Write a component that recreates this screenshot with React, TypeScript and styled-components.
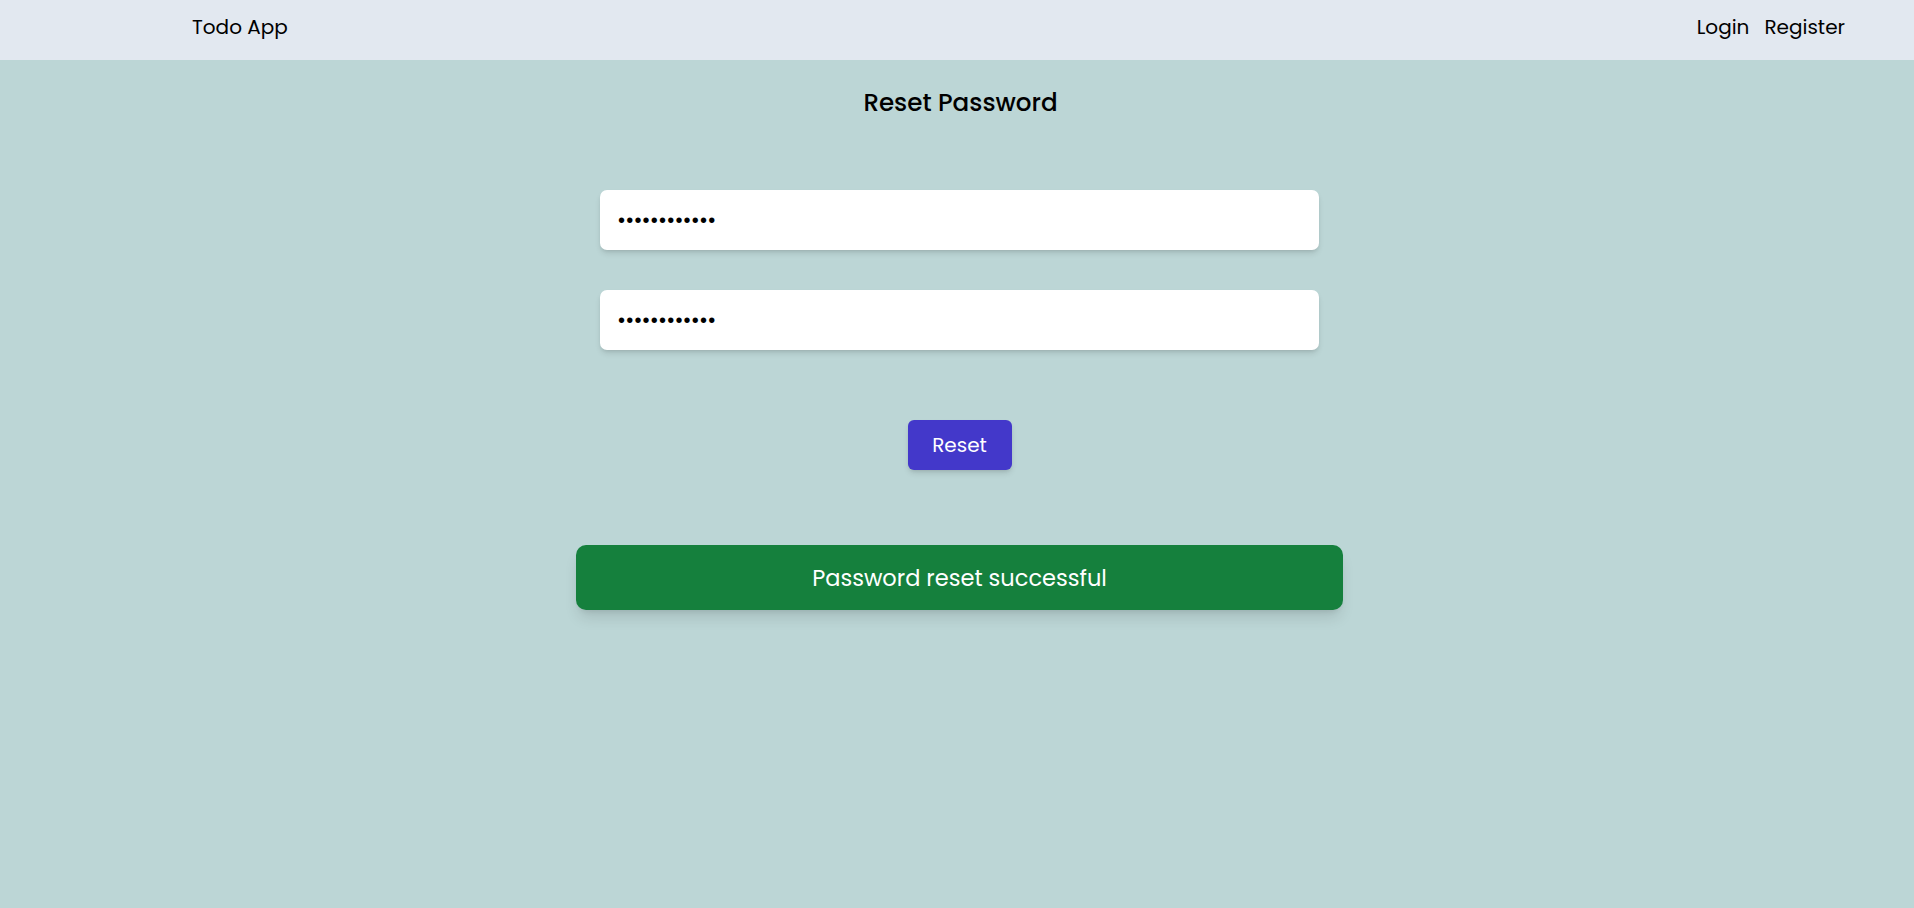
import { createGlobalStyle } from "styled-components"
import styled from "styled-components"

const GlobalStyle = createGlobalStyle`
  * {
    box-sizing: border-box;
  }
  body {
    margin: 0;
    font-family: "Poppins", "Open Sans", "Noto Sans", sans-serif;
    background: #bcd6d6;
    color: #000;
  }
`

export default function App() {
  return (
    <>
      <GlobalStyle />
      <Page>
        <NavBar>
          <Brand>Todo App</Brand>
          <NavLinks>
            <NavLink href="#">Login</NavLink>
            <NavLink href="#">Register</NavLink>
          </NavLinks>
        </NavBar>

        <Main>
          <Title>Reset Password</Title>
          <Form onSubmit={(e) => e.preventDefault()}>
            <PasswordInput type="password" defaultValue="newpassword1" />
            <PasswordInput type="password" defaultValue="newpassword1" />
            <ResetBtn type="submit">Reset</ResetBtn>
          </Form>
          <SuccessBox>Password reset successful</SuccessBox>
        </Main>
      </Page>
    </>
  )
}

const Page = styled.div`
  min-height: 100vh;
  display: flex;
  flex-direction: column;
`
const NavBar = styled.header`
  height: 60px;
  background: #e2e8f0;
  display: flex;
  align-items: center;
  justify-content: space-between;
  padding: 0 69px 6px 192px;
`
const Brand = styled.div`
  font-size: 20px;
`
const NavLinks = styled.nav`
  display: flex;
  gap: 15px;
`
const NavLink = styled.a`
  font-size: 20px;
  color: #000;
  text-decoration: none;
`
const Main = styled.main`
  display: flex;
  flex-direction: column;
  align-items: center;
  padding-left: 5px;
`
const Title = styled.h1`
  margin: 28px 0 0 2px;
  font-size: 24.6px;
  font-weight: 500;
  line-height: 30px;
`
const Form = styled.form`
  margin-top: 72px;
  width: 719px;
  display: flex;
  flex-direction: column;
  align-items: center;
  gap: 40px;
`
const PasswordInput = styled.input`
  width: 100%;
  height: 60px;
  border: none;
  outline: none;
  border-radius: 7px;
  background: #fff;
  padding: 0 18px;
  font-size: 20px;
  letter-spacing: 1.2px;
  box-shadow: 0 4px 6px -1px rgba(0, 0, 0, 0.12), 0 2px 4px -2px rgba(0, 0, 0, 0.12);
`
const ResetBtn = styled.button`
  margin-top: 30px;
  width: 104px;
  height: 50px;
  border: none;
  border-radius: 6px;
  background: #4338ca;
  color: #fff;
  font-family: inherit;
  font-size: 20px;
  cursor: pointer;
  box-shadow: 0 4px 6px -1px rgba(0, 0, 0, 0.12), 0 2px 4px -2px rgba(0, 0, 0, 0.12);
`
const SuccessBox = styled.div`
  margin-top: 75px;
  width: 767px;
  height: 65px;
  border-radius: 10px;
  background: #15803d;
  color: #fff;
  font-size: 22.5px;
  display: flex;
  align-items: center;
  justify-content: center;
  box-shadow: 0 10px 15px -3px rgba(0, 0, 0, 0.12), 0 4px 6px -4px rgba(0, 0, 0, 0.12);
`
